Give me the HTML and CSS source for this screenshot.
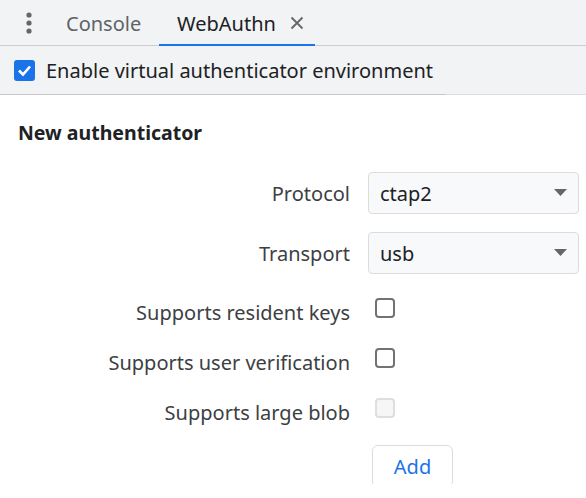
FILE: index.html
```html
<!DOCTYPE html>
<html>
<head>
<meta charset="utf-8">
<link rel="stylesheet" href="styles.css">
</head>
<body>
<div class="tabbar">
  <div class="menu">
    <svg width="6" height="22" viewBox="0 0 6 22"><circle cx="3" cy="3" r="2.6" fill="#666"/><circle cx="3" cy="11" r="2.6" fill="#666"/><circle cx="3" cy="19" r="2.6" fill="#666"/></svg>
  </div>
  <div class="tab">Console</div>
  <div class="tab active">WebAuthn
    <svg class="close" width="14" height="14" viewBox="0 0 14 14"><path d="M1.5 1.5 L12.5 12.5 M12.5 1.5 L1.5 12.5" stroke="#666" stroke-width="1.8"/></svg>
  </div>
</div>
<div class="toolbar">
  <label class="enable">
    <span class="cb-checked"><svg width="21" height="21" viewBox="0 0 21 21"><path d="M5 10.5 L9 14.5 L16 6.5" stroke="#fff" stroke-width="2.6" fill="none"/></svg></span>
    Enable virtual authenticator environment
  </label>
</div>
<main class="content">
  <h2 class="heading">New authenticator</h2>
  <div class="form">
    <label class="lbl">Protocol</label>
    <div class="select-wrap">
      <select class="select"><option>ctap2</option></select>
      <svg class="arrow" width="13" height="7" viewBox="0 0 13 7"><path d="M0 0 H13 L6.5 7 Z" fill="#666"/></svg>
    </div>
    <label class="lbl">Transport</label>
    <div class="select-wrap">
      <select class="select"><option>usb</option></select>
      <svg class="arrow" width="13" height="7" viewBox="0 0 13 7"><path d="M0 0 H13 L6.5 7 Z" fill="#666"/></svg>
    </div>
    <label class="lbl cb-lbl">Supports resident keys</label>
    <div class="cell"><span class="cb"></span></div>
    <label class="lbl cb-lbl">Supports user verification</label>
    <div class="cell"><span class="cb"></span></div>
    <label class="lbl cb-lbl">Supports large blob</label>
    <div class="cell"><span class="cb disabled"></span></div>
    <div></div>
    <div class="cell btn-cell"><button class="add">Add</button></div>
  </div>
</main>
</body>
</html>
```
FILE: styles.css
```css
* { box-sizing: border-box; }
body {
  margin: 0;
  font-family: "Noto Sans", "Open Sans", sans-serif;
  font-size: 20px;
  color: #202124;
  background: #fff;
}
.tabbar {
  height: 46px;
  background: #f1f3f4;
  display: flex;
  align-items: stretch;
  box-shadow: inset 0 -1px 0 #cbcdd1;
}
.menu {
  width: 48px;
  display: flex;
  align-items: center;
  justify-content: center;
  padding-left: 10px;
}
.tab {
  display: flex;
  align-items: center;
  padding: 0 18px;
  color: #5f6368;
  width: 111px;
  white-space: nowrap;
}
.tab.active {
  color: #202124;
  width: 156px;
  padding-right: 10px;
  box-shadow: inset 0 -2px 0 #1a73e8;
}
.close { margin-left: 14px; }
.toolbar {
  height: 49px;
  background: #f1f3f4;
  border-bottom: 1px solid #dcdde0;
  display: flex;
}
.enable {
  width: 446px;
  display: flex;
  align-items: center;
  padding-left: 14px;
  gap: 11px;
  white-space: nowrap;
  box-shadow: 0 1px 0 #c4c6c9;
}
.cb-checked {
  width: 21px;
  height: 21px;
  border-radius: 3px;
  background: #1a73e8;
  display: flex;
}
.content { padding: 25px 8px 0 18px; }
.heading {
  margin: 0;
  font-size: 19.5px;
  font-weight: 700;
  line-height: 26px;
  color: #202124;
}
.form {
  margin-top: 26px;
  margin-left: -18px;
  display: grid;
  grid-template-columns: 350px 211px;
  column-gap: 18px;
  row-gap: 18px;
  grid-template-rows: 42px 42px 32px 32px 32px 42px;
}
.lbl {
  align-self: center;
  justify-self: end;
  color: #3c4043;
  white-space: nowrap;
}
.cb-lbl { margin-top: 8px; }
.select-wrap { position: relative; }
.select {
  appearance: none;
  width: 100%;
  height: 42px;
  border: 1px solid #dadce0;
  border-radius: 4px;
  background: #f8f9fa;
  font: inherit;
  color: #202124;
  padding: 0 11px;
}
.arrow {
  position: absolute;
  right: 12px;
  top: 17px;
  pointer-events: none;
}
.cell { display: flex; align-items: center; }
.cb {
  width: 20px;
  height: 20px;
  margin-left: 7px;
  border: 2px solid #727272;
  border-radius: 4px;
}
.cb.disabled { border-color: #dedede; background: #f6f6f6; }
.btn-cell { padding-top: 3px; align-items: flex-start; }
.add {
  width: 81px;
  height: 42px;
  margin-left: 4px;
  border: 1px solid #dadce0;
  border-radius: 6px;
  background: #fff;
  color: #1a73e8;
  font: inherit;
  font-size: 20px;
}
```
